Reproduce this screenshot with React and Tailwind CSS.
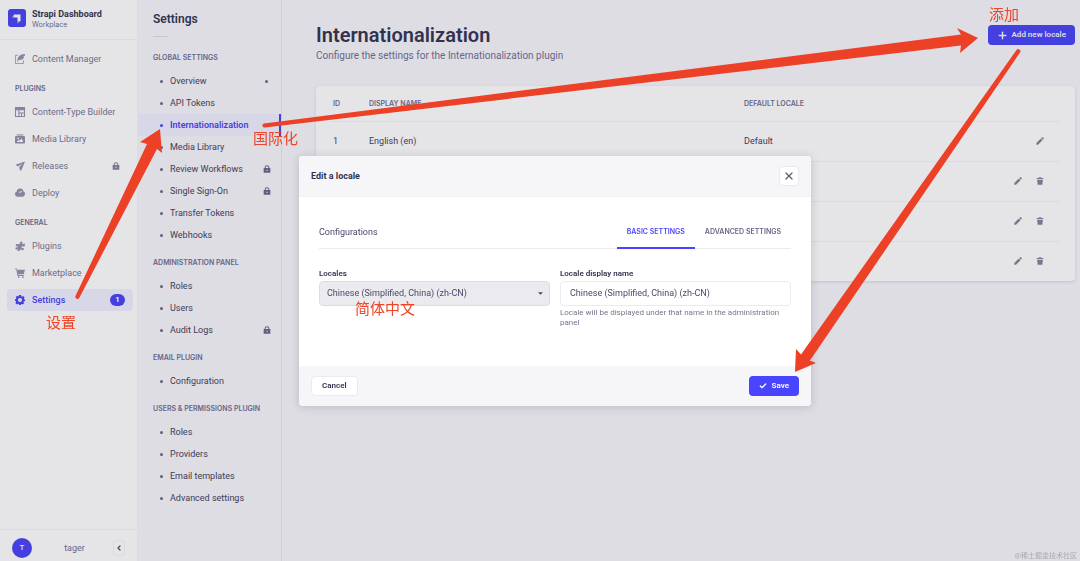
import React, { useState } from 'react';
import { Plus, X, Check, ChevronLeft } from 'lucide-react';

const pluginLinks = [
    { name: 'Content-Type Builder', icon: 'layout' },
    { name: 'Media Library', icon: 'media' },
    { name: 'Releases', icon: 'plane', locked: true },
    { name: 'Deploy', icon: 'cloud' },
];

const generalLinks = [
    { name: 'Plugins', icon: 'puzzle' },
    { name: 'Marketplace', icon: 'cart' },
    { name: 'Settings', icon: 'cog', badge: 1 },
];

const settingsSections = [
    {
        title: 'Global settings',
        links: [
            { name: 'Overview', dot: true },
            { name: 'API Tokens' },
            { name: 'Internationalization' },
            { name: 'Media Library' },
            { name: 'Review Workflows', locked: true },
            { name: 'Single Sign-On', locked: true },
            { name: 'Transfer Tokens' },
            { name: 'Webhooks' },
        ],
    },
    {
        title: 'Administration panel',
        links: [{ name: 'Roles' }, { name: 'Users' }, { name: 'Audit Logs', locked: true }],
    },
    { title: 'Email plugin', links: [{ name: 'Configuration' }] },
    {
        title: 'Users & Permissions plugin',
        links: [{ name: 'Roles' }, { name: 'Providers' }, { name: 'Email templates' }, { name: 'Advanced settings' }],
    },
];

const locales = [
    { id: 1, name: 'English (en)', isDefault: true },
    { id: 2 },
    { id: 3 },
    { id: 4 },
];

function Icon({ name, className }) {
    return (
        <svg viewBox="0 0 24 24" fill="currentColor" className={className} aria-hidden="true">
            {name === 'write' && (
                <>
                    <path d="M7 3H1v20h19v-8" fill="none" stroke="currentColor" strokeWidth="2" />
                    <path d="M24 0C14 0 7 5 6 13l-1 6 2-1 2-4c8 1 12-3 13-7h-3l4-2c1-2 1-3 1-5z" />
                </>
            )}
            {name === 'layout' && (
                <path fillRule="evenodd" d="M0 0h24v24H0V0zm2.500 7.500v14H8v-14H2.500zm8 0V13h11V7.500h-11zm0 8v6h4v-6h-4zm6.500 0v6h4.500v-6H17z" />
            )}
            {name === 'media' && (
                <>
                    <path d="M4 1h16v2.500H4z" />
                    <path fillRule="evenodd" d="M2 5h20a2 2 0 012 2v14a2 2 0 01-2 2H2a2 2 0 01-2-2V7a2 2 0 012-2zm3 14h14v-3l-4-5-4 5-2-2-4 4v1zM7.500 8.500a2 2 0 100 4 2 2 0 000-4z" />
                </>
            )}
            {name === 'plane' && <path d="M24 1L1 9l6 4 11-7-8 9 2 8h3L24 1z" />}
            {name === 'cloud' && (
                <path fillRule="evenodd" d="M12 1c5 0 8 3 8 7 3 1 4 3 4 6s-2 7-6 7H6c-4 0-6-3-6-7 0-3 2-5 4-5 0-5 3-8 8-8zm-2 9l2 2 5-3-1-2-4 2-1-1-1 2z" />
            )}
            {name === 'puzzle' && (
                <path d="M13 7c-2-3-1-6 2-6s4 3 2 5l3 2 2-2 2 1-1 6-4 0c-2-1-4 1-3 3s3 1 4 0l2 4-5 3c-1-3-5-4-6-1 0 1 1 1 1 2H6l1-4c-3 1-6 0-6-2 0-3 3-4 5-2l1-3-5-1 0-5 4 0c1 2 4 1 4-1z" />
            )}
            {name === 'cart' && (
                <>
                    <path d="M0 1h4l1 3h19l-3 11H8l.5 2H21v2H6L3 3H0V1z" />
                    <circle cx="9" cy="22" r="2" />
                    <circle cx="19" cy="22" r="2" />
                </>
            )}
            {name === 'cog' && (
                <path fillRule="evenodd" d="M9.500 0h5l.7 3 2 .9L20 2.300 23 6l-1.600 2.600.5 1.700 2.100.7v3.500l-2.800.8-.9 1.900L22 20l-3.500 3-2.600-1.600-1.400.6-.7 2h-4l-.9-2.200-1.800-.8L4 22.500 1 19l1.600-2.500-.6-1.700-2-.8v-4l2.500-.7.9-1.900L1.800 5 5 1.800l2.600 1.500 1.300-.6L9.500 0zM12 7a5 5 0 100 10 5 5 0 000-10z" />
            )}
            {name === 'lock' && (
                <path fillRule="evenodd" d="M5 9V7.500a7 7 0 0114 0V9h3v14H2V9h3zm3 0h8V7.500a4 4 0 00-8 0V9zm2.500 5v4h3v-4h-3z" />
            )}
            {name === 'pencil' && <path d="M1 23v-5L14.500 4.500l5 5L6 23H1zM16 3l2.500-2.500a1.500 1.500 0 012 0l3 3a1.500 1.500 0 010 2L21 8l-5-5z" />}
            {name === 'trash' && <path d="M2 3h6l1-2h6l1 2h6v3H2V3zm1.500 5h17L19 23H5L3.500 8z" />}
        </svg>
    );
}

function NavLink({ link, active }) {
    return (
        <a
            href="#"
            className={`flex h-[22px] items-center rounded-sm px-2 text-[9px] whitespace-nowrap ${
                active ? 'bg-[#d8d7e8] font-medium text-[#4440df]' : 'text-[#6c6c8a]'
            }`}
        >
            <Icon name={link.icon} className={`mr-[7px] h-[10px] w-[10px] shrink-0 ${active ? '' : 'text-[#85859e]'}`} />
            <span className="flex-1 pt-0.5">{link.name}</span>
            {link.locked && <Icon name="lock" className="mr-[5px] h-2 w-2 text-[#77778f]" />}
            {link.badge && (
                <span className="flex h-3 w-[15px] items-center justify-center rounded-full bg-[#4440df] text-[8px] text-white">
                    {link.badge}
                </span>
            )}
        </a>
    );
}

function NavSection({ title, links }) {
    return (
        <>
            <h2 className="mt-[13px] mb-[6px] pl-2 font-[Inter,sans-serif] text-[7px] leading-3 font-semibold text-[#666687] uppercase">{title}</h2>
            <div className="flex flex-col gap-[5px]">
                {links.map((link) => (
                    <NavLink key={link.name} link={link} active={link.name === 'Settings'} />
                ))}
            </div>
        </>
    );
}

function Sidebar() {
    return (
        <nav className="flex w-[138px] shrink-0 flex-col border-r border-[#dcdce2] bg-[#e5e5e7]">
            <div className="flex h-10 items-center border-b border-[#dadae0] pb-1 pl-2">
                <svg viewBox="0 0 18 18" className="h-[18px] w-[18px]" aria-hidden="true">
                    <rect width="18" height="18" rx="3" fill="#4440df" />
                    <path d="M6 5.500h6.500V12H9.500V8.500H6z" fill="#e5e5e7" />
                    <path d="M6 5.500v3H3.800zM9.500 12h3l-3 2.500z" fill="#a5a3e4" />
                </svg>
                <div className="ml-1.5 pt-0.5">
                    <p className="text-[9px] leading-3 font-bold text-[#32324d]">Strapi Dashboard</p>
                    <p className="font-[Inter,sans-serif] text-[7px] leading-[10px] text-[#666687]">Workplace</p>
                </div>
            </div>
            <div className="flex flex-1 flex-col pt-2 pr-1 pl-[7px]">
                <NavLink link={{ name: 'Content Manager', icon: 'write' }} />
                <NavSection title="Plugins" links={pluginLinks} />
                <NavSection title="General" links={generalLinks} />
            </div>
            <div className="flex h-8 items-center border-t border-[#dadae0] pt-1 pr-3 pl-3">
                <span className="flex h-5 w-5 items-center justify-center rounded-full bg-[#4440df] text-[8px] font-medium text-[#dedde4]">T</span>
                <span className="flex-1 pt-0.5 pl-1 text-center text-[9px] text-[#666687]">tager</span>
                <button className="flex h-4 w-3 items-center justify-center rounded-sm border border-[#dadae0]" aria-label="Collapse">
                    <ChevronLeft className="h-2 w-2 shrink-0 text-[#4a4a6a]" strokeWidth={4} />
                </button>
            </div>
        </nav>
    );
}

function SettingsNav() {
    return (
        <nav className="w-36 shrink-0 border-r border-[#cfcfd8]">
            <div className="px-[15px] pt-3">
                <h2 className="text-[12px] leading-[15px] font-semibold text-[#32324d]">Settings</h2>
                <div className="mt-[9px] w-[15px] border-t border-[#c8c8d0]" />
            </div>
            <div className="flex flex-col gap-[11px] pt-[15px]">
                {settingsSections.map((section) => (
                    <div key={section.title}>
                        <h3 className="mb-[6px] pl-[15px] font-[Inter,sans-serif] text-[7px] leading-3 font-semibold text-[#666687] uppercase">{section.title}</h3>
                        {section.links.map((link) => {
                            const active = link.name === 'Internationalization';
                            return (
                                <a
                                    key={link.name}
                                    href="#"
                                    className={`flex h-[22px] items-center border-r-2 pr-2 pl-[22px] text-[9px] ${
                                        active
                                            ? 'border-[#4440df] bg-[#d8d7e8] font-semibold text-[#4440df]'
                                            : 'border-transparent text-[#3c3c57]'
                                    }`}
                                >
                                    <span className={`mr-[7px] h-[3px] w-[3px] rounded-full ${active ? 'bg-[#4440df]' : 'bg-[#5f5f7e]'}`} />
                                    <span className="flex-1 pt-0.5">{link.name}</span>
                                    {link.locked && <Icon name="lock" className="h-2 w-2 text-[#5f5f7e]" />}
                                    {link.dot && <span className="mr-[3px] h-[3px] w-[3px] rounded-full bg-[#5f5f7e]" />}
                                </a>
                            );
                        })}
                    </div>
                ))}
            </div>
        </nav>
    );
}

function LocaleTable() {
    return (
        <div className="mt-6 rounded-sm bg-[#e5e5e7] px-[15px] shadow-[0_1px_3px_rgba(50,50,77,0.15)]">
            <table className="w-full table-fixed text-left text-[9px] text-[#3c3c57]">
                <thead>
                    <tr className="h-[35px] border-b border-[#dadae0] font-[Inter,sans-serif] text-[7px] text-[#666687] uppercase">
                        <th className="w-[36px] pt-0.5 pl-0.5 font-semibold">ID</th>
                        <th className="w-[375px] pt-0.5 pl-0.5 font-semibold">Display name</th>
                        <th className="pt-0.5 pl-0.5 font-semibold">Default locale</th>
                        <th className="w-20" aria-label="Actions" />
                    </tr>
                </thead>
                <tbody>
                    {locales.map((locale) => (
                        <tr key={locale.id} className="h-10 border-b border-[#dadae0] last:border-0">
                            <td className="pt-0.5 pl-0.5">{locale.name && locale.id}</td>
                            <td className="pt-0.5 pl-0.5">{locale.name}</td>
                            <td className="pt-0.5 pl-0.5">{locale.isDefault && 'Default'}</td>
                            <td>
                                <div className="flex justify-end gap-[14px] pr-4 text-[#77778f]">
                                    <button aria-label="Edit">
                                        <Icon name="pencil" className="h-2 w-2" />
                                    </button>
                                    {!locale.isDefault && (
                                        <button aria-label="Delete">
                                            <Icon name="trash" className="h-2 w-2" />
                                        </button>
                                    )}
                                </div>
                            </td>
                        </tr>
                    ))}
                </tbody>
            </table>
        </div>
    );
}

function LocaleModal() {
    const [displayName, setDisplayName] = useState('Chinese (Simplified, China) (zh-CN)');

    return (
        <div className="fixed inset-0 flex items-center justify-center pl-[30px]">
            <div
                role="dialog"
                aria-label="Edit a locale"
                className="w-full max-w-lg overflow-hidden rounded-sm bg-white text-[#32324d] shadow-[0_1px_10px_rgba(50,50,77,0.2)]"
            >
                <div className="flex h-[41px] items-center justify-between border-b border-[#f0f0f4] bg-[#f6f6f9] px-3">
                    <h2 className="pt-0.5 text-[9px] font-bold">Edit a locale</h2>
                    <button className="flex h-5 w-5 items-center justify-center rounded-sm border border-[#eaeaef] bg-white" aria-label="Close">
                        <X className="h-3 w-3 text-[#5c5c7c]" strokeWidth={2.5} />
                    </button>
                </div>
                <div className="px-5 pt-[30px] pb-[38px]">
                    <div className="flex h-[22px] justify-between border-b border-[#eaeaef]">
                        <h3 className="text-[9px] leading-[10px] text-[#4a4a6a]">Configurations</h3>
                        <div className="-mb-px flex font-[Inter,sans-serif] text-[7px] leading-[10px] font-semibold text-[#666687]">
                            <button className="flex items-start border-b-2 border-[#4945ff] px-[10px] text-[#4945ff] uppercase">Basic settings</button>
                            <button className="flex items-start px-[10px] uppercase">Advanced settings</button>
                        </div>
                    </div>
                    <div className="mt-5 grid grid-cols-2 gap-[10px]">
                        <div>
                            <label htmlFor="locale" className="block text-[8px] leading-[10px] font-semibold">Locales</label>
                            <div className="relative mt-0.5">
                                <select
                                    id="locale"
                                    className="block h-[25px] w-full appearance-none rounded-sm border border-[#dcdce4] bg-[#eaeaef] px-[7px] pt-0.5 text-[9px] text-[#4a4a6a]"
                                >
                                    <option>Chinese (Simplified, China) (zh-CN)</option>
                                </select>
                                <svg viewBox="0 0 6 3" className="pointer-events-none absolute top-[11px] right-[7px] h-[3px] w-[5px]" aria-hidden="true">
                                    <path d="M0 0h6L3 3z" fill="#4a4a6a" />
                                </svg>
                            </div>
                        </div>
                        <div>
                            <label htmlFor="display-name" className="block text-[8px] leading-[10px] font-semibold">Locale display name</label>
                            <input
                                id="display-name"
                                value={displayName}
                                onChange={(e) => setDisplayName(e.target.value)}
                                className="mt-0.5 block h-[25px] w-full rounded-sm border border-[#eaeaef] px-[9px] text-[9px] text-[#4a4a6a]"
                            />
                            <p className="mt-0.5 text-[8px] leading-[10px] text-[#77778f]">
                                Locale will be displayed under that name in the administration panel
                            </p>
                        </div>
                    </div>
                </div>
                <div className="flex h-10 items-center justify-between bg-[#f6f6f9] px-3">
                    <button className="h-5 rounded-sm border border-[#eaeaef] bg-white px-[10px] text-[8px] font-semibold">Cancel</button>
                    <button className="flex h-5 items-center gap-[5px] rounded-sm bg-[#4945ff] px-[10px] text-[8px] font-semibold text-white">
                        <Check className="h-2 w-2" strokeWidth={4} />
                        Save
                    </button>
                </div>
            </div>
        </div>
    );
}

// Red arrows and notes that lead through the steps
function Guide() {
    return (
        <div className="pointer-events-none fixed inset-0 font-['Noto_Sans_CJK_SC',sans-serif] text-[15px] leading-5 text-[#ee4427]">
            <svg viewBox="0 0 1080 561" width="1080" height="561" className="absolute top-0 left-0" fill="#ec4126" aria-hidden="true">
                <path d="M75.500 296L147 144l-7-2 20-13 2 24-5-4L79.500 297.500a2 2 0 01-4-1.500z" />
                <path d="M264 123.500L961 34.500l-4-6.500 21 10-18 15 1-7.500L265 127.500a2 2 0 01-1-4z" />
                <path d="M1016.500 50L801 354.500l-5-5.500-1 23 21-9-6-2.500L1020 52.500a2 2 0 00-3.500-2.500z" />
            </svg>
            <span className="absolute top-1 left-[989px]">添加</span>
            <span className="absolute top-32 left-[253px]">国际化</span>
            <span className="absolute top-[312px] left-[46px]">设置</span>
            <span className="absolute top-[298px] left-[355px]">简体中文</span>
        </div>
    );
}

function App() {
    return (
        <div className="flex min-h-screen bg-[#dedde4] font-[Roboto,sans-serif]">
            <Sidebar />
            <SettingsNav />
            <main className="flex-1 pt-[23px] pr-[5px] pl-[34px]">
                <header className="flex items-start justify-between">
                    <div>
                        <h1 className="text-[20px] leading-6 font-semibold text-[#32324d]">Internationalization</h1>
                        <p className="mt-0.5 text-[10px] leading-[13px] text-[#666687]">Configure the settings for the Internationalization plugin</p>
                    </div>
                    <button className="mt-0.5 flex h-5 items-center gap-1 rounded-sm bg-[#4440df] px-[9px] text-[8px] font-semibold text-[#dedde4]">
                        <Plus className="h-[11px] w-[11px]" strokeWidth={3} />
                        Add new locale
                    </button>
                </header>
                <LocaleTable />
            </main>
            <LocaleModal />
            <Guide />
            <span className="fixed right-[3px] bottom-0 font-['Noto_Sans_CJK_SC',sans-serif] text-[7px] leading-3 text-[#a9a9b0]">@稀土掘金技术社区</span>
        </div>
    );
}

export default App;
